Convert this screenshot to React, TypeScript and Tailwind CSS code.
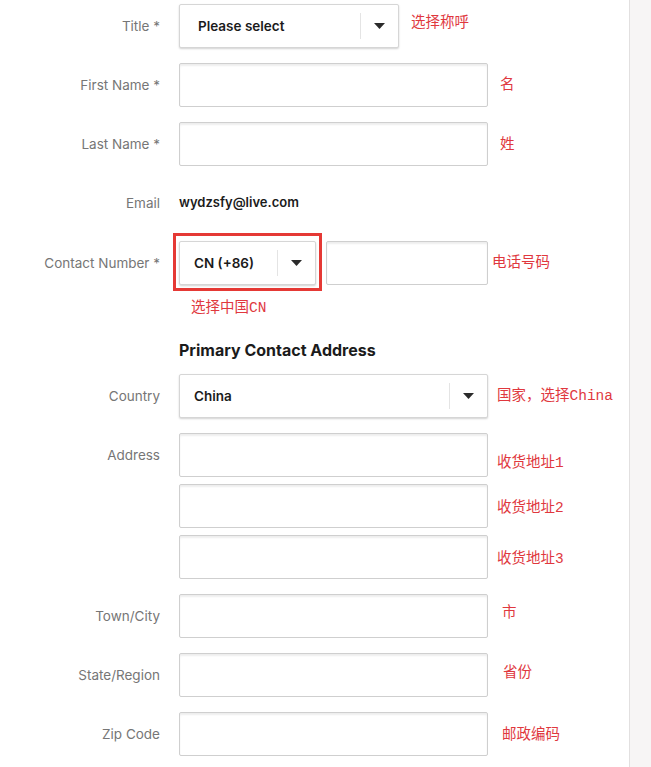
import React from "react";

const sans = { fontFamily: "Inter, 'Noto Sans', sans-serif" };
const note = { fontFamily: "'Liberation Mono', 'Noto Sans CJK SC', monospace" };

function Label({ children }: { children: React.ReactNode }) {
  return (
    <div className="w-[160px] shrink-0 text-right text-[13.5px] text-[#767676]" style={sans}>
      {children}
    </div>
  );
}

function Note({ children, className = "" }: { children: React.ReactNode; className?: string }) {
  return (
    <span className={`text-[14.5px] text-[#e0383e] whitespace-nowrap ${className}`} style={note}>
      {children}
    </span>
  );
}

function TextBox({ className = "w-[309px]" }: { className?: string }) {
  return (
    <div
      className={`h-[44px] rounded-[2px] border border-[#cfcfcf] bg-white shadow-[inset_0_2px_2px_rgba(0,0,0,0.07)] ${className}`}
    />
  );
}

function Select({ value, width, pad }: { value: string; width: string; pad: string }) {
  return (
    <div
      className={`flex h-[44px] items-center rounded-[2px] border border-[#d6d6d6] bg-white shadow-[0_1px_2px_rgba(0,0,0,0.18)] ${width}`}
    >
      <span className={`flex-1 text-[13.5px] font-semibold text-[#1b1b1b] ${pad}`} style={sans}>
        {value}
      </span>
      <div className="flex h-[26px] w-[38px] items-center justify-center border-l border-[#e4e4e4]">
        <svg width="11" height="6" viewBox="0 0 11 6">
          <path d="M0 0 L11 0 L5.5 6 Z" fill="#2b2b2b" />
        </svg>
      </div>
    </div>
  );
}

export default function App() {
  return (
    <div className="flex min-h-[767px] w-[651px] bg-white">
      <div className="w-[630px] shrink-0 border-r border-[#e2e0e0] pt-[4px]">
        {/* Title */}
        <div className="flex items-center">
          <Label>Title *</Label>
          <div className="ml-[19px]">
            <Select value="Please select" width="w-[220px]" pad="pl-[18px]" />
          </div>
          <Note className="ml-[12px] -mt-[4px]">选择称呼</Note>
        </div>

        {/* First name */}
        <div className="mt-[15px] flex items-center">
          <Label>First Name *</Label>
          <div className="ml-[19px]">
            <TextBox />
          </div>
          <Note className="ml-[12px] mt-[2px]">名</Note>
        </div>

        {/* Last name */}
        <div className="mt-[15px] flex items-center">
          <Label>Last Name *</Label>
          <div className="ml-[19px]">
            <TextBox />
          </div>
          <Note className="ml-[12px] mt-[4px]">姓</Note>
        </div>

        {/* Email */}
        <div className="mt-[15px] flex h-[44px] items-center">
          <Label>Email</Label>
          <span className="ml-[19px] text-[13px] font-semibold text-[#1b1b1b]" style={sans}>
            wydzsfy@live.com
          </span>
        </div>

        {/* Contact number */}
        <div className="mt-[16px] flex items-center">
          <Label>Contact Number *</Label>
          <div className="relative ml-[19px]">
            <Select value="CN (+86)" width="w-[137px]" pad="pl-[14px]" />
            <div className="pointer-events-none absolute -left-[6px] -top-[8px] h-[58px] w-[149px] border-[3px] border-[#e53935]" />
          </div>
          <div className="ml-[10px]">
            <TextBox className="w-[162px]" />
          </div>
          <Note className="ml-[4px] mt-[2px]">电话号码</Note>
        </div>

        <div className="mt-[9px] pl-[191px]">
          <Note>选择中国CN</Note>
        </div>

        {/* Heading */}
        <div className="mt-[18px] pl-[179px] text-[16px] font-bold text-[#1b1b1b]" style={sans}>
          Primary Contact Address
        </div>

        {/* Country */}
        <div className="mt-[12px] flex items-center">
          <Label>Country</Label>
          <div className="ml-[19px]">
            <Select value="China" width="w-[309px]" pad="pl-[14px]" />
          </div>
          <Note className="ml-[9px] mt-[3px]">国家，选择China</Note>
        </div>

        {/* Address */}
        <div className="mt-[15px] flex items-start">
          <div className="pt-[12px]">
            <Label>Address</Label>
          </div>
          <div className="ml-[19px] flex flex-col gap-[7px]">
            <TextBox />
            <TextBox />
            <TextBox />
          </div>
          <div className="ml-[9px] flex flex-col pt-[19px]">
            <Note className="leading-[22px]">收货地址1</Note>
            <Note className="mt-[23px] leading-[22px]">收货地址2</Note>
            <Note className="mt-[29px] leading-[22px]">收货地址3</Note>
          </div>
        </div>

        {/* Town */}
        <div className="mt-[15px] flex items-center">
          <Label>Town/City</Label>
          <div className="ml-[19px]">
            <TextBox />
          </div>
          <Note className="ml-[14px] -mt-[4px]">市</Note>
        </div>

        {/* State */}
        <div className="mt-[15px] flex items-center">
          <Label>State/Region</Label>
          <div className="ml-[19px]">
            <TextBox />
          </div>
          <Note className="ml-[15px] -mt-[2px]">省份</Note>
        </div>

        {/* Zip */}
        <div className="mt-[15px] flex items-center">
          <Label>Zip Code</Label>
          <div className="ml-[19px]">
            <TextBox />
          </div>
          <Note className="ml-[14px] mt-[5px]">邮政编码</Note>
        </div>
      </div>
      <div className="flex-1 bg-[#f7f5f5]" />
    </div>
  );
}
